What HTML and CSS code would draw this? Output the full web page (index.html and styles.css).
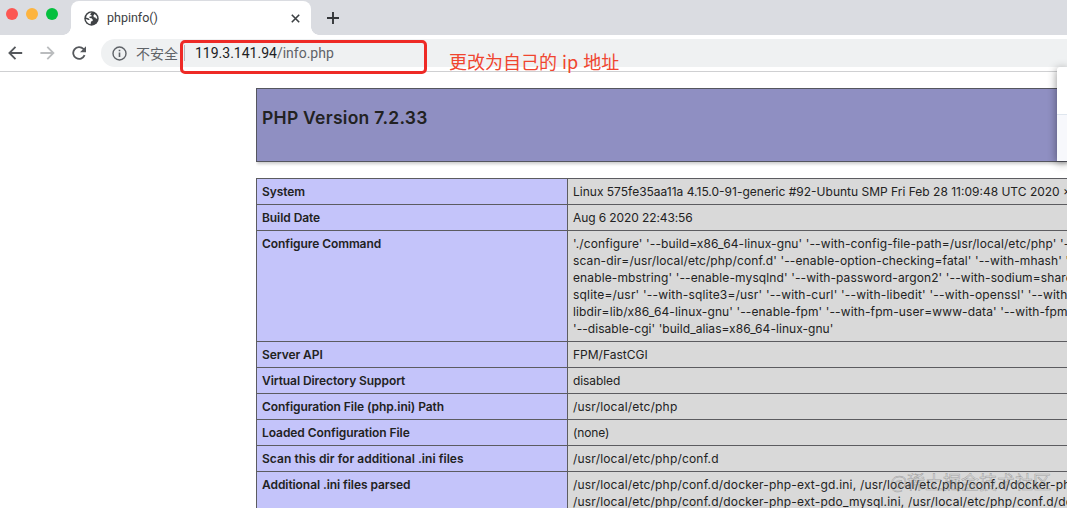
FILE: index.html
```
<!DOCTYPE html>
<html lang="zh">
<head>
  <meta charset="UTF-8">
  <meta name="viewport" content="width=device-width, initial-scale=1.0">
  <title>phpinfo()</title>
  <link rel="stylesheet" href="styles.css">
</head>
<body>
  <header class="tabs">
    <div class="lights">
      <span class="light red"></span>
      <span class="light yellow"></span>
      <span class="light green"></span>
    </div>
    <div class="tab">
      <svg class="globe" width="15" height="15" viewBox="0 0 15 15">
        <circle cx="7.5" cy="7.5" r="7.2" fill="#3f4245"/>
        <path d="M7.6 1.6 L6 3.6 L7.6 4.2 L7.4 5.4 L5.6 5.6 L5.4 7 L7.6 7.2 L8.8 8.8 L8.6 10 L7 10.6 L6.6 13.2 C3.8 12.6 2 10.6 1.7 8 L4.6 9 L5.8 8.8 L4.4 7.2 L2 6.4 C2.6 3.8 4.8 1.8 7.6 1.6 Z" fill="#fff"/>
        <path d="M10.6 3 L9.4 4.6 L9.8 6.2 L11.4 6.4 L11.8 7.6 L13.2 7.8 C13.3 5.8 12.3 4 10.6 3 Z" fill="#fff"/>
      </svg>
      <span class="tab-title">phpinfo()</span>
      <svg width="9" height="9" viewBox="0 0 9 9" stroke="#3c4043" stroke-width="1.6">
        <path d="M0.8 0.8 L8.2 8.2 M8.2 0.8 L0.8 8.2"/>
      </svg>
    </div>
    <svg class="plus" width="12" height="12" viewBox="0 0 12 12" stroke="#333639" stroke-width="1.9">
      <path d="M6 0 V12 M0 6 H12"/>
    </svg>
  </header>

  <nav class="toolbar">
    <svg class="back" width="15" height="14" viewBox="0 0 15 14" fill="none" stroke="#55585c" stroke-width="1.8">
      <path d="M14.2 7 H1.6 M7.5 0.9 L1.4 7 L7.5 13.1"/>
    </svg>
    <svg class="forward" width="15" height="14" viewBox="0 0 15 14" fill="none" stroke="#babcbe" stroke-width="1.8">
      <path d="M0.4 7 H13.2 M7.3 0.9 L13.4 7 L7.3 13.1"/>
    </svg>
    <svg class="reload" width="15" height="14" viewBox="0 0 15 14">
      <path d="M12.6 9.2 A5.9 5.9 0 1 1 11.4 2.9 L12.6 4.1" fill="none" stroke="#55585c" stroke-width="1.8"/>
      <path d="M14 0.2 V6.2 H8 Z" fill="#55585c"/>
    </svg>
    <div class="address">
      <svg width="15" height="15" viewBox="0 0 15 15">
        <circle cx="7.5" cy="7.5" r="6.5" fill="none" stroke="#5f6368" stroke-width="1.4"/>
        <path d="M7.5 6.5 V11 M7.5 3.7 V5.2" stroke="#5f6368" stroke-width="1.6"/>
      </svg>
      <span class="insecure">不安全</span>
      <span class="divider"></span>
      <span class="url"><span class="host">119.3.141.94</span>/info.php</span>
    </div>
  </nav>

  <div class="mark"></div>
  <div class="note">更改为自己的 ip 地址</div>

  <main class="center">
    <div class="version"><h1>PHP Version 7.2.33</h1></div>
    <table>
      <tr><td class="e">System</td><td class="v">Linux 575fe35aa11a 4.15.0-91-generic #92-Ubuntu SMP Fri Feb 28 11:09:48 UTC 2020 x86_64</td></tr>
      <tr><td class="e">Build Date</td><td class="v"><span class="tight">Aug 6 2020 22:43:56</span></td></tr>
      <tr>
        <td class="e">Configure Command</td>
        <td class="v">
          <span class="loose">'./configure' '--build=x86_64-linux-gnu' '--with-config-file-path=/usr/local/etc/php' '--with-config-file-</span><br>
          <span class="loose">scan-dir=/usr/local/etc/php/conf.d' '--enable-option-checking=fatal' '--with-mhash' '--enable-ftp' '--</span><br>
          <span class="loose">enable-mbstring' '--enable-mysqlnd' '--with-password-argon2' '--with-sodium=shared' '--with-pdo-</span><br>
          <span class="wide">sqlite=/usr' '--with-sqlite3=/usr' '--with-curl' '--with-libedit' '--with-openssl' '--with-zlib' '--with-</span><br>
          <span class="loose">libdir=lib/x86_64-linux-gnu' '--enable-fpm' '--with-fpm-user=www-data' '--with-fpm-group=www-data'</span><br>
          <span class="snug">'--disable-cgi' 'build_alias=x86_64-linux-gnu'</span>
        </td>
      </tr>
      <tr><td class="e">Server API</td><td class="v">FPM/FastCGI</td></tr>
      <tr><td class="e">Virtual Directory Support</td><td class="v"><span class="tight">disabled</span></td></tr>
      <tr><td class="e">Configuration File (php.ini) Path</td><td class="v"><span class="wide">/usr/local/etc/php</span></td></tr>
      <tr><td class="e">Loaded Configuration File</td><td class="v"><span class="tight">(none)</span></td></tr>
      <tr><td class="e"><span class="snug">Scan this dir for additional .ini files</span></td><td class="v"><span class="wide">/usr/local/etc/php/conf.d</span></td></tr>
      <tr>
        <td class="e">Additional .ini files parsed</td>
        <td class="v">
          <span class="wide">/usr/local/etc/php/conf.d/docker-php-ext-gd.ini, /usr/local/etc/php/conf.d/docker-php-ext-mysqli.ini,</span><br>
          <span class="wide">/usr/local/etc/php/conf.d/docker-php-ext-pdo_mysql.ini, /usr/local/etc/php/conf.d/docker-php-ext-sodium.ini</span>
        </td>
      </tr>
    </table>
  </main>

  <div class="popup">
    <div class="popup-top"></div>
    <div class="popup-bottom"></div>
  </div>
  <div class="watermark">@稀土掘金技术社区</div>
</body>
</html>
```
FILE: styles.css
```
* {
  box-sizing: border-box;
}

body {
  margin: 0;
  height: 508px;
  overflow: hidden;
  position: relative;
  background: #fff;
  color: #222;
  font-family: Inter, "Noto Sans CJK SC", sans-serif;
}

svg {
  display: block;
  flex: none;
}

.tabs {
  display: flex;
  height: 35px;
  background: #dadce1;
}

.lights {
  display: flex;
  gap: 8px;
  width: 71px;
  padding: 8px 0 0 6px;
}

.light {
  width: 12px;
  height: 12px;
  border-radius: 50%;
}

.red { background: #fc5753; }
.yellow { background: #fdb43f; }
.green { background: #05c03f; }

.tab {
  position: relative;
  display: flex;
  align-items: center;
  width: 240px;
  height: 34px;
  margin-top: 1px;
  padding: 0 11px 0 13px;
  border-radius: 8px 8px 0 0;
  background: #fff;
}

/* curved feet of the active tab */
.tab::before,
.tab::after {
  content: "";
  position: absolute;
  bottom: 0;
  width: 8px;
  height: 8px;
}

.tab::before {
  left: -8px;
  background: radial-gradient(circle at 0 0, transparent 7.5px, #fff 8px);
}

.tab::after {
  right: -8px;
  background: radial-gradient(circle at 100% 0, transparent 7.5px, #fff 8px);
}

.tab-title {
  flex: 1;
  margin-left: 8px;
  padding-bottom: 1px;
  font: 12.5px Roboto, sans-serif;
  color: #3c4043;
}

.plus {
  margin: 12px 0 0 16px;
}

.toolbar {
  display: flex;
  align-items: center;
  height: 37px;
  padding-left: 8px;
  border-bottom: 1px solid #cfd0d2;
}

.forward { margin-left: 17px; }
.reload { margin-left: 17px; }

.address {
  display: flex;
  align-items: center;
  flex: 1;
  height: 28px;
  margin-left: 14px;
  padding-left: 11px;
  border-radius: 14px 0 0 14px;
  background: #eff1f2;
  font-size: 14px;
  color: #5f6368;
}

.insecure {
  width: 43px;
  margin-left: 9px;
  font-family: "Noto Sans CJK SC", sans-serif;
  white-space: nowrap;
}

.divider {
  width: 1px;
  height: 16px;
  margin: 0 10px 0 5px;
  background: #b5b7ba;
}

.url {
  font: 14px Roboto, sans-serif;
}

.host {
  color: #202124;
}

.mark {
  position: absolute;
  left: 180px;
  top: 40px;
  width: 247px;
  height: 34px;
  border: 3px solid #ee2a26;
  border-radius: 5px;
}

.note {
  position: absolute;
  left: 449px;
  top: 48px;
  font: 18px/26px "Noto Sans CJK SC", sans-serif;
  word-spacing: 1px;
  color: #f0452f;
  white-space: nowrap;
}

.center {
  margin: 16px 0 0 256px;
  height: 420px;
  overflow: hidden;
}

.version {
  width: 934px;
  height: 74px;
  margin-bottom: 16px;
  padding: 17px 5px;
  border: 1px solid #55565f;
  background: #8f8fc2;
  box-shadow: 1px 2px 3px #ccc;
}

h1 {
  margin: 0;
  font-size: 17.5px;
  font-weight: 600;
  line-height: 24px;
  letter-spacing: 0.27px;
}

table {
  width: 934px;
  table-layout: fixed;
  border-collapse: collapse;
}

td {
  padding: 4px 5px;
  border: 1px solid #5c5c60;
  font-size: 12px;
  line-height: 17px;
  vertical-align: top;
  white-space: nowrap;
}

.e {
  width: 311px;
  background: #c4c4fa;
  font-weight: 600;
  letter-spacing: -0.07px;
}

.v {
  background: #d9d9d9;
}

.tight { letter-spacing: -0.1px; }
.snug { letter-spacing: 0.05px; }
.loose { letter-spacing: 0.115px; }
.wide { letter-spacing: 0.19px; }

.popup {
  position: absolute;
  right: 0;
  top: 67px;
  width: 10px;
  height: 94px;
  border-radius: 3px 0 0 3px;
  background: #fff;
  box-shadow: 0 2px 10px rgba(0, 0, 0, 0.45);
}

.popup-top {
  height: 48px;
  border-bottom: 1px solid #dfe6ee;
}

.popup-bottom {
  height: 46px;
  background: #f7f8fc;
}

.watermark {
  position: absolute;
  left: 890px;
  top: 468px;
  font: 18px/26px "Noto Sans CJK SC", sans-serif;
  color: transparent;
  -webkit-text-stroke: 0.5px rgba(110, 110, 110, 0.55);
  white-space: nowrap;
}
```
